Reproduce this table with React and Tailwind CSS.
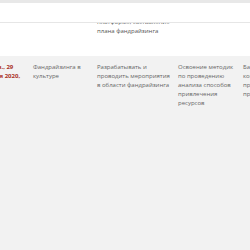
import React from 'react';

const FONT = "font-['Open_Sans',sans-serif]";

const rows = {
  area: 'Фандрайзинга в культуре',
  task: 'Разрабатывать и проводить мероприятия в области фандрайзинга',
  skill: 'Освоение методик по проведению анализа способов привлечения ресурсов',
  extra: 'Базовые компетенции проведения презентаций',
};

export default function App() {
  return (
    <div className={`w-[250px] h-[250px] overflow-hidden bg-[#f2f2f2] ${FONT}`}>
      <div className="h-[3px] bg-[#e8e8e8]" />

      {/* previous row, half scrolled under the header */}
      <div className="h-[53px] bg-white">
        <div className="h-[20px] border-b border-[#e6e6e6]" />
        <div className="h-[32px] overflow-hidden">
          <div className="flex ml-[-14px] -mt-[5px] text-[6px] leading-[9px] text-[#555]">
            <div className="w-[111px] shrink-0" />
            <div className="w-[81px] shrink-0 whitespace-nowrap">
              <p>платформе, составление</p>
              <p>плана фандрайзинга</p>
            </div>
          </div>
        </div>
      </div>

      <div className="flex ml-[-14px] pt-[7px] text-[6px] leading-[9px] text-[#666]">
        <div className="w-[47px] shrink-0 pr-[6px] font-bold text-[#a9301e] whitespace-nowrap">
          <p className="pl-[7px]">Пн., 29</p>
          <p>июня 2020,</p>
        </div>
        <div className="w-[64px] shrink-0 pr-[14px]">{rows.area}</div>
        <div className="w-[81px] shrink-0 pr-[8px]">{rows.task}</div>
        <div className="w-[65px] shrink-0 pr-[6px]">{rows.skill}</div>
        <div className="w-[60px] shrink-0">{rows.extra}</div>
      </div>
    </div>
  );
}
